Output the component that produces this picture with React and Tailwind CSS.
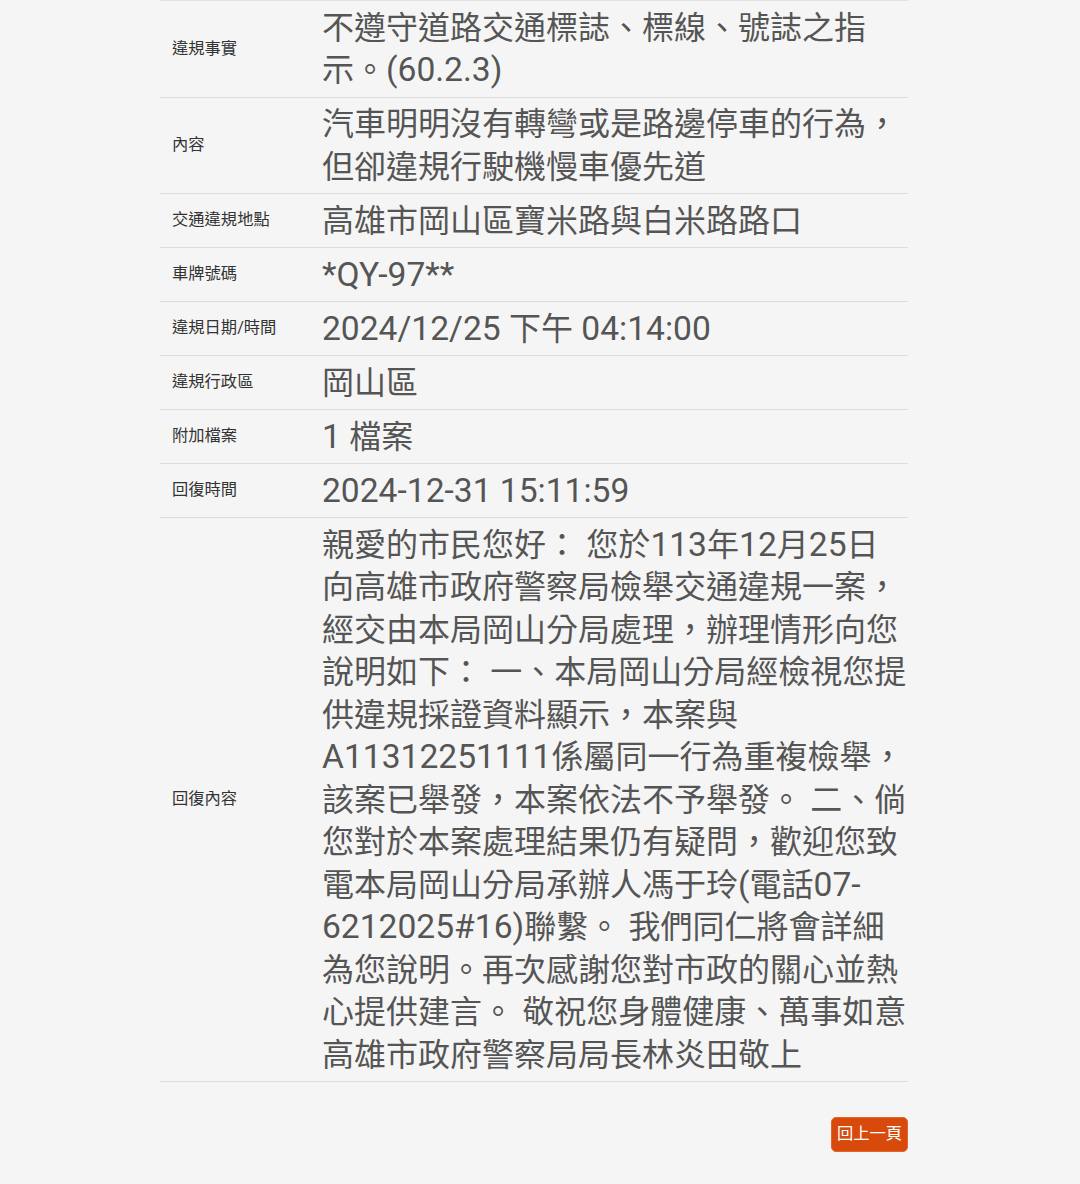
import { Fragment } from "react";

function Mixed({ text }) {
  const parts = text.split(/([\x20-\x7E]+)/);
  return parts.map((p, i) =>
    /^[\x20-\x7E]+$/.test(p) ? (
      <span key={i} className="text-[33.6px] leading-[41px]">
        {p}
      </span>
    ) : (
      <Fragment key={i}>{p}</Fragment>
    )
  );
}

export default function App() {
  const rows = [
    { label: "違規事實", value: "不遵守道路交通標誌、標線、號誌之指示。(60.2.3)" },
    { label: "內容", value: "汽車明明沒有轉彎或是路邊停車的行為，但卻違規行駛機慢車優先道" },
    { label: "交通違規地點", value: "高雄市岡山區寶米路與白米路路口" },
    { label: "車牌號碼", value: "*QY-97**" },
    { label: "違規日期/時間", value: "2024/12/25 下午 04:14:00" },
    { label: "違規行政區", value: "岡山區" },
    { label: "附加檔案", value: "1 檔案" },
    { label: "回復時間", value: "2024-12-31 15:11:59" },
    {
      label: "回復內容",
      value:
        "親愛的市民您好： 您於113年12月25日向高雄市政府警察局檢舉交通違規一案，經交由本局岡山分局處理，辦理情形向您說明如下： 一、本局岡山分局經檢視您提供違規採證資料顯示，本案與A11312251111係屬同一行為重複檢舉，該案已舉發，本案依法不予舉發。 二、倘您對於本案處理結果仍有疑問，歡迎您致電本局岡山分局承辦人馮于玲(電話07-6212025#16)聯繫。 我們同仁將會詳細為您說明。再次感謝您對市政的關心並熱心提供建言。 敬祝您身體健康、萬事如意 高雄市政府警察局局長林炎田敬上",
    },
  ];
  return (
    <div
      className="min-h-[1184px] w-full bg-[#f5f5f5]"
      style={{ fontFamily: 'Roboto, "Noto Sans CJK TC", "Noto Sans", sans-serif' }}
    >
      <div className="ml-[160px] w-[748px]">
        <div className="border-t border-[#e2e2e2]">
          {rows.map((r) => (
            <div key={r.label} className="flex border-b border-[#dcdcdc]">
              <div className="flex w-[150px] shrink-0 items-center pl-[12px] text-[16.3px] text-[#333333]">
                {r.label}
              </div>
              <div className="w-[598px] pl-[12px] pt-[5.5px] pb-[5px] text-[32px] leading-[42.5px] text-[#555555] break-words">
                <Mixed text={r.value} />
              </div>
            </div>
          ))}
        </div>
        <div className="mt-[35px] flex justify-end">
          <button className="h-[35px] w-[77px] rounded-[5px] border border-[#e4642a] bg-[#d74a0c] text-[16.3px] text-white">
            回上一頁
          </button>
        </div>
      </div>
    </div>
  );
}
